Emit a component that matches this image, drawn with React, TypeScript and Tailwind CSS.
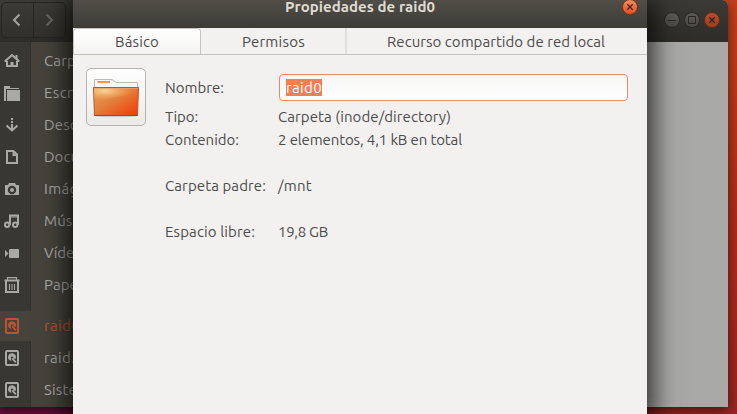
import { useLayoutEffect, useRef, useState, type ReactNode } from "react";

const FONT = "font-['Ubuntu','Noto_Sans',sans-serif]";

// Single-line label whose tracking is adjusted so that it fills a given width.
function Label({ text, width, className = "" }: { text: string; width: number; className?: string }) {
  const ref = useRef<HTMLSpanElement>(null);
  const [spacing, setSpacing] = useState(0);
  useLayoutEffect(() => {
    const natural = ref.current?.getBoundingClientRect().width ?? width;
    setSpacing((width - natural) / text.length);
  }, [text, width]);
  return (
    <span ref={ref} className={`inline-block whitespace-pre ${className}`} style={{ letterSpacing: spacing }}>
      {text}
    </span>
  );
}

function Glyph({ children }: { children: ReactNode }) {
  return (
    <svg width="16" height="16" viewBox="0 0 16 16" fill="none" stroke="currentColor" strokeWidth="2">
      {children}
    </svg>
  );
}

const Home = () => (
  <Glyph>
    <path d="M.7 8.600 8 2l7.300 6.600" />
    <path d="M2 8h2v4h2.500V9h3v3H12V8h2v6H2zM11.500 2h2v4h-2z" fill="currentColor" stroke="none" />
  </Glyph>
);
const FolderIcon = () => (
  <Glyph>
    <path d="M0 1h6v2h9v1H2v12H0z" fill="currentColor" stroke="none" />
    <path d="M3 5h13v11H3z" fill="currentColor" stroke="none" />
  </Glyph>
);
const Download = () => (
  <Glyph>
    <path d="M8 1v2M8 4v2M8 7v6" />
    <path d="M2.500 8.500 8 13.500l5.500-5" />
  </Glyph>
);
const Doc = () => (
  <Glyph>
    <path d="M3 2h6.500L13 5.500V14H3z" />
    <path d="M8.500 2v5H13z" fill="currentColor" stroke="none" />
  </Glyph>
);
const Camera = () => (
  <Glyph>
    <path d="M1 4h3l1-2h6l1 2h3v10H1zm7 .8a4.200 4.200 0 1 0 0 8.400 4.200 4.200 0 0 0 0-8.400z" fill="currentColor" stroke="none" fillRule="evenodd" />
    <circle cx="8" cy="9" r="2" fill="currentColor" stroke="none" />
  </Glyph>
);
const Music = () => (
  <Glyph>
    <circle cx="3.200" cy="11.700" r="2.200" />
    <circle cx="11.200" cy="11.700" r="2.200" />
    <path d="M6 11.700V2.500h8v9.200" />
    <path d="M6 4h8" strokeWidth="1" />
  </Glyph>
);
const Video = () => (
  <Glyph>
    <rect x="5" y="4" width="10" height="9" rx=".8" fill="currentColor" stroke="none" />
    <path d="M1 5l3.500 3.500L1 12z" fill="currentColor" stroke="none" />
  </Glyph>
);
const Trash = () => (
  <Glyph>
    <path d="M2 4v11h12V4M.5 3.500h15" />
    <path d="M3.500 3V.6h9V3M5.500 7v6M8 7v6M10.500 7v6" strokeWidth="1.100" />
  </Glyph>
);
const Disk = () => (
  <Glyph>
    <rect x="2" y="1" width="12" height="14" rx="1" />
    <path d="M8 3.300a3.900 3.900 0 0 0-3 6.500l2.200 1.200V8.700L6.800 7.200 8 6.300l1.300.9.200 1.600h2.200A3.900 3.900 0 0 0 8 3.300z" fill="currentColor" stroke="none" />
    <path d="m8.300 8.300 3.500 4" strokeWidth="1.800" />
  </Glyph>
);

const places = [
  { icon: Home, text: "Carpeta", width: 54 },
  { icon: FolderIcon, text: "Escritorio", width: 68 },
  { icon: Download, text: "Descargas", width: 70 },
  { icon: Doc, text: "Documentos", width: 86 },
  { icon: Camera, text: "Imágenes", width: 68 },
  { icon: Music, text: "Música", width: 47 },
  { icon: Video, text: "Vídeos", width: 45 },
  { icon: Trash, text: "Papelera", width: 60 },
];
const drives = [
  { text: "raid0", width: 36, active: true },
  { text: "raid5", width: 36, active: false },
  { text: "Sistema", width: 54, active: false },
];

function Sidebar() {
  return (
    <div className="relative w-[160px] shrink-0 bg-[#45433b] pt-[3px] text-[#a9a9a6]">
      <div className="absolute inset-y-0 left-0 w-[31px] border-r border-[#302f2a] bg-[#383731]" />
      {places.map(({ icon: Icon, text, width }) => (
        <div key={text} className="relative flex h-8 items-center">
          <span className="ml-1 mr-6 shrink-0"><Icon /></span>
          <Label text={text} width={width} />
        </div>
      ))}
      <div className="mt-[10px] flex flex-col gap-[2px]">
        {drives.map(({ text, width, active }) => (
          <div key={text} className={`relative flex h-[30px] items-center ${active ? "bg-[#45433b] text-[#b7552f]" : ""}`}>
            <span className="ml-1 mr-6 shrink-0"><Disk /></span>
            <Label text={text} width={width} />
          </div>
        ))}
      </div>
    </div>
  );
}

function WindowButton({ kind }: { kind: "min" | "max" | "close" }) {
  return (
    <span className={`flex size-4 items-center justify-center rounded-full border ${kind === "close" ? "border-[#6b2a16] bg-linear-to-b from-[#b05030] to-[#a33c1a]" : "border-[#292824] bg-linear-to-b from-[#5c5b55] to-[#494842]"}`}>
      <svg className="shrink-0" width="10" height="10" viewBox="0 0 10 10" fill="none" stroke="#282722" strokeWidth="1">
        {kind === "min" && <path d="M1 5.500h8" />}
        {kind === "max" && <path d="M1.500 1.500h7v7h-7z" />}
        {kind === "close" && <path d="m2.300 2.300 5.400 5.400m0-5.400-5.400 5.400" strokeWidth="1.300" />}
      </svg>
    </span>
  );
}

function FolderPicture() {
  return (
    <svg width="48" height="40" viewBox="0 0 48 40">
      <defs>
        <linearGradient id="front" x1="0" y1="0" x2="1" y2="1">
          <stop offset="0" stopColor="#e9a45a" />
          <stop offset=".45" stopColor="#e2803c" />
          <stop offset=".8" stopColor="#ee5018" />
          <stop offset="1" stopColor="#dc4413" />
        </linearGradient>
        <radialGradient id="glow" cx=".25" cy=".2" r=".65">
          <stop offset="0" stopColor="#f7d698" />
          <stop offset="1" stopColor="#f3a55d" stopOpacity="0" />
        </radialGradient>
      </defs>
      <ellipse cx="24" cy="38" rx="21" ry="1.300" fill="#bbb" opacity=".6" />
      <path d="M2.500 12V1.500H20L24 4.500h21.500V12z" fill="#f7f6f5" stroke="#bcbab7" />
      <rect x="5.500" y="3" width="12.500" height="2" fill="#f0945f" />
      <path d="M1.500 9.500h45l-1 28h-43z" fill="url(#front)" stroke="#c9501f" />
      <path d="M2 10h44l-.4 6Q24 18 2.200 25z" fill="url(#glow)" />
      <path d="M2 10.500h44" stroke="#f4a070" opacity=".6" />
      <path d="M2.500 37.500h43" stroke="#b83b12" />
    </svg>
  );
}

const facts = [
  { name: "Tipo:", nw: 33, value: "Carpeta (inode/directory)", vw: 173 },
  { name: "Contenido:", nw: 74, value: "2 elementos, 4,1 kB en total", vw: 184 },
  null,
  { name: "Carpeta padre:", nw: 101, value: "/mnt", vw: 34 },
  null,
  { name: "Espacio libre:", nw: 90, value: "19,8 GB", vw: 50 },
];

function Dialog() {
  return (
    <section className="absolute left-[73px] top-0 flex h-[414px] w-[574px] flex-col bg-[#f2f1ef] text-[#4c4c4c] shadow-[0_4px_24px_6px_rgba(0,0,0,0.75)]">
      <header className="relative flex h-7 shrink-0 justify-center bg-linear-to-b from-[#504e47] to-[#3d3c36] font-bold text-[#dfdbd2]">
        <Label text="Propiedades de raid0" width={150} className="-mt-[2px] h-[18px] leading-[18px]" />
        <span className="absolute right-[9px] top-[-1px] flex size-4 items-center justify-center rounded-full border border-[#7e3418] bg-linear-to-b from-[#f58a60] to-[#e2501e]">
          <svg className="shrink-0" width="8" height="8" viewBox="0 0 8 8" stroke="#4d2113" strokeWidth="1.300"><path d="m1.300 1.300 5.400 5.400m0-5.400L1.300 6.700" /></svg>
        </span>
      </header>
      <nav className="flex h-[27px] shrink-0 border-b border-[#c5c3c0]">
        <div className="flex w-[128px] items-center justify-center rounded-t-[4px] border border-b-0 border-[#c5c3c0] bg-linear-to-b from-white to-[#f4f3f2]">
          <Label text="Básico" width={44} />
        </div>
        <div className="flex w-[146px] items-center justify-center border-r-2 border-[#e1dfdd] pt-[2px] pl-px">
          <Label text="Permisos" width={63} />
        </div>
        <div className="flex flex-1 items-center justify-center pr-[2px] pt-[2px]">
          <Label text="Recurso compartido de red local" width={218} />
        </div>
      </nav>
      <div className="flex pl-[13px] pt-[13px]">
        <div className="flex h-[58px] w-[60px] items-center justify-center rounded-[5px] border border-[#b5b3b0] bg-linear-to-b from-white to-[#ebeae9] pt-[2px]">
          <FolderPicture />
        </div>
        <div className="ml-[19px] pt-[6px]">
          <div className="flex h-[27px] items-center">
            <div className="w-[114px]"><Label text="Nombre:" width={59} /></div>
            <div className="flex h-[27px] w-[349px] items-center rounded-[4px] border border-[#e58b69] bg-linear-to-b from-[#f6f6f5] to-white pl-[6px]">
              <Label text="raid0" width={36} className="h-[17px] bg-[#f07f52] leading-[17px] text-white" />
            </div>
          </div>
          <div className="mt-[4px]">
            {facts.map((f, i) => (
              <div key={i} className="flex h-[23px] items-center">
                {f && (
                  <>
                    <div className="w-[113px]"><Label text={f.name} width={f.nw} /></div>
                    <Label text={f.value} width={f.vw} />
                  </>
                )}
              </div>
            ))}
          </div>
        </div>
      </div>
    </section>
  );
}

export default function App() {
  return (
    <main className={`relative h-[414px] w-[737px] overflow-hidden bg-linear-to-r from-[#680d3a] to-[#96231f] text-[15px] leading-5 ${FONT}`}>
      <div className="absolute right-0 top-0 h-full w-[90px] bg-linear-to-b from-[#c4401a] via-[#b02d18] to-[#9a2522]" />
      <section className="absolute left-0 top-0 flex h-[407px] w-[728px] flex-col rounded-tr-[6px] bg-[#a8a8a6] shadow-[0_3px_12px_rgba(0,0,0,0.55)]">
        <header className="flex h-[42px] shrink-0 items-start justify-between rounded-tr-[6px] bg-linear-to-b from-[#3b3a35] to-[#2d2c28] pr-[8px]">
          <div className="ml-px mt-[2px] flex h-9 w-[65px] rounded-[5px] border border-[#272622] bg-linear-to-b from-[#3b3a35] to-[#31302c]">
            <div className="flex w-8 items-center justify-center border-r border-[#272622] text-[#a5a5a0]">
              <svg width="12" height="14" viewBox="0 0 12 14" fill="none" stroke="currentColor" strokeWidth="2"><path d="M8.500 1.500 3 7l5.500 5.500" /></svg>
            </div>
            <div className="flex w-8 items-center justify-center text-[#686761]">
              <svg width="12" height="14" viewBox="0 0 12 14" fill="none" stroke="currentColor" strokeWidth="2"><path d="M3.500 1.500 9 7l-5.500 5.500" /></svg>
            </div>
          </div>
          <div className="mt-3 flex gap-1">
            <WindowButton kind="min" />
            <WindowButton kind="max" />
            <WindowButton kind="close" />
          </div>
        </header>
        <div className="flex min-h-0 flex-1"><Sidebar /></div>
      </section>
      <Dialog />
    </main>
  );
}
